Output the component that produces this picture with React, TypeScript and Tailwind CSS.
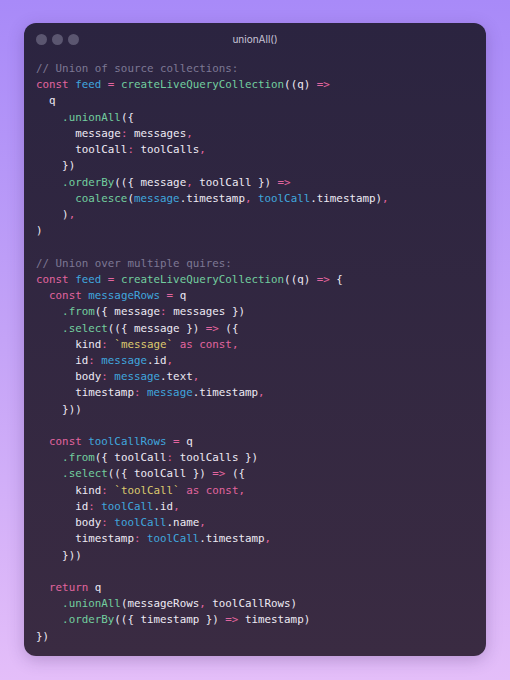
import React from "react";

type Tok = [string, string];

const C = "text-[#7d7894]";
const K = "text-[#e2659f]";
const B = "text-[#40a6de]";
const G = "text-[#72ce9f]";
const W = "text-[#eeeaf4]";
const Y = "text-[#dcc96e]";

const lines: Tok[][] = [
  [["// Union of source collections:", C]],
  [["const ", K], ["feed ", B], ["= ", K], ["createLiveQueryCollection", G], ["((q) ", W], ["=>", K]],
  [["  q", W]],
  [["    .unionAll", G], ["({", W]],
  [["      message", W], [": ", K], ["messages", W], [",", K]],
  [["      toolCall", W], [": ", K], ["toolCalls", W], [",", K]],
  [["    })", W]],
  [["    .orderBy", G], ["(({ message", W], [", ", K], ["toolCall }) ", W], ["=>", K]],
  [["      coalesce", G], ["(", W], ["message", B], [".timestamp", W], [", ", K], ["toolCall", B], [".timestamp)", W], [",", K]],
  [["    )", W], [",", K]],
  [[")", W]],
  [],
  [["// Union over multiple quires:", C]],
  [["const ", K], ["feed ", B], ["= ", K], ["createLiveQueryCollection", G], ["((q) ", W], ["=> ", K], ["{", W]],
  [["  const ", K], ["messageRows ", B], ["= ", K], ["q", W]],
  [["    .from", G], ["({ message", W], [": ", K], ["messages })", W]],
  [["    .select", G], ["(({ message }) ", W], ["=> ", K], ["({", W]],
  [["      kind", W], [": ", K], ["`message`", Y], [" as const", K], [",", K]],
  [["      id", W], [": ", K], ["message", B], [".id", W], [",", K]],
  [["      body", W], [": ", K], ["message", B], [".text", W], [",", K]],
  [["      timestamp", W], [": ", K], ["message", B], [".timestamp", W], [",", K]],
  [["    }))", W]],
  [],
  [["  const ", K], ["toolCallRows ", B], ["= ", K], ["q", W]],
  [["    .from", G], ["({ toolCall", W], [": ", K], ["toolCalls })", W]],
  [["    .select", G], ["(({ toolCall }) ", W], ["=> ", K], ["({", W]],
  [["      kind", W], [": ", K], ["`toolCall`", Y], [" as const", K], [",", K]],
  [["      id", W], [": ", K], ["toolCall", B], [".id", W], [",", K]],
  [["      body", W], [": ", K], ["toolCall", B], [".name", W], [",", K]],
  [["      timestamp", W], [": ", K], ["toolCall", B], [".timestamp", W], [",", K]],
  [["    }))", W]],
  [],
  [["  return ", K], ["q", W]],
  [["    .unionAll", G], ["(messageRows", W], [", ", K], ["toolCallRows)", W]],
  [["    .orderBy", G], ["(({ timestamp }) ", W], ["=> ", K], ["timestamp)", W]],
  [["})", W]],
];

export default function App() {
  return (
    <div className="w-[510px] h-[680px] bg-gradient-to-b from-[#a88af8] via-[#c4a3f7] to-[#e4bef9] pl-[24px] pt-[23px]">
      <div className="w-[462px] h-[633px] rounded-[12px] bg-gradient-to-b from-[#2b2440] to-[#3a2b42] flex flex-col shadow-[0_4px_16px_rgba(60,30,100,0.25)]">
        <div className="h-[32px] flex items-center pl-[12px] relative">
          <div className="flex gap-[5px]">
            <span className="w-[11px] h-[11px] rounded-full bg-[#5b5670]" />
            <span className="w-[11px] h-[11px] rounded-full bg-[#5b5670]" />
            <span className="w-[11px] h-[11px] rounded-full bg-[#5b5670]" />
          </div>
          <div className="absolute inset-0 flex items-center justify-center text-[10px] text-[#c8c3d6] font-['Inter','Noto_Sans',sans-serif]">
            unionAll()
          </div>
        </div>
        <pre className="pl-[12px] pt-[6px] m-0 font-['DejaVu_Sans_Mono',monospace] text-[10.85px] leading-[16.23px] whitespace-pre">
          {lines.map((l, i) => (
            <div key={i} className="h-[16.23px]">
              {l.map(([t, c], j) => (
                <span key={j} className={c}>
                  {t}
                </span>
              ))}
            </div>
          ))}
        </pre>
      </div>
    </div>
  );
}
